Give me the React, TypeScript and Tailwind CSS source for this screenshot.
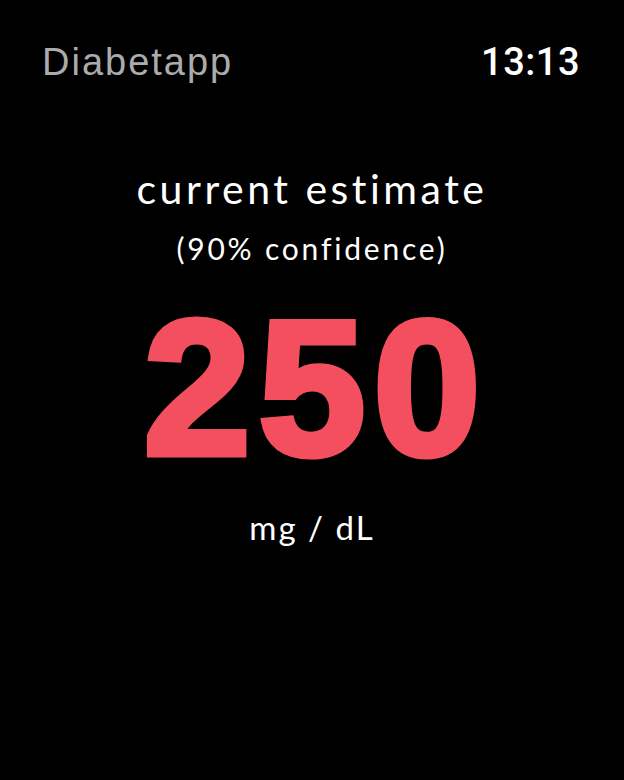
export default function App() {
  return (
    <div className="w-[624px] h-[780px] bg-black text-white flex flex-col overflow-hidden">
      <div className="flex justify-between items-baseline pl-[42px] pr-[44px] pt-[43px]">
        <span className="font-['Liberation_Sans',Arial,sans-serif] text-[38px] tracking-[2px] text-[#ababab] leading-none">Diabetapp</span>
        <span className="font-['Roboto',Arial,sans-serif] text-[38px] font-medium leading-none tracking-[0.5px]">13:13</span>
      </div>
      <div className="flex flex-col items-center font-['Lato','Noto_Sans',sans-serif]">
        <div className="text-[41px] leading-none tracking-[3.5px] mt-[87px]">current estimate</div>
        <div className="text-[30px] leading-none mt-[24px] tracking-[2.8px]">(90% confidence)</div>
        <div className="font-['Liberation_Sans',Arial,sans-serif] font-bold text-[192px] leading-none text-[#f44f5f] mt-[29px] pl-[8px] tracking-[8px] [-webkit-text-stroke:7px_#f44f5f]">250</div>
        <div className="text-[33px] leading-none mt-[27px] tracking-[2px]">mg / dL</div>
      </div>
    </div>
  );
}
